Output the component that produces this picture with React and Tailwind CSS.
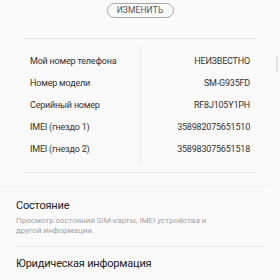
import React from 'react';

const rows = [
  ['Мой номер телефона', 'НЕИЗВЕСТНО'],
  ['Номер модели', 'SM-G935FD'],
  ['Серийный номер', 'RF8J105Y1PH'],
  ['IMEI (гнездо 1)', '358982075651510'],
  ['IMEI (гнездо 2)', '358983075651518'],
];

const App = () => {
  return (
    <div className="relative w-[280px] h-[280px] overflow-hidden bg-[#fafafa] font-['Roboto','Liberation_Sans',sans-serif]">
      {/* scroll edge */}
      <div className="absolute right-[2px] top-[57px] w-[2px] h-[15px] rounded-b-full bg-[#e4e4e4]" />

      <div className="flex justify-center pt-[3px]">
        <div className="w-[67px] h-[15px] rounded-full border border-[#a8a8a8] flex items-center justify-center text-[8.5px] text-[#555] tracking-[0.1px]">
          ИЗМЕНИТЬ
        </div>
      </div>

      <div className="mt-[20px] mx-[24px] h-px bg-[#e2e2e2]" />

      <div className="mx-[24px] pt-[6px] pb-[7px]">
        <div className="flex">
          <div className="w-[116px] pt-[6px] pb-[4px] pl-[6px]">
            {rows.map(([label]) => (
              <div key={label} className="h-[22px] flex items-center text-[9px] tracking-[-0.2px] text-[#333] whitespace-nowrap">
                {label}
              </div>
            ))}
          </div>
          <div className="flex-1 border-l border-[#ebebeb] pt-[6px] pb-[4px] pr-[6px]">
            {rows.map(([label, value]) => (
              <div key={label} className="h-[22px] flex items-center justify-end text-[9px] tracking-[-0.2px] text-[#333] whitespace-nowrap">
                {value}
              </div>
            ))}
          </div>
        </div>
      </div>

      <div className="mx-[24px] h-px bg-[#e2e2e2]" />

      <div className="mt-[13px] w-[270px] h-px bg-[#f2f2f2]" />

      <div className="px-[16px]">
        <div className="mt-[12px] text-[11px] leading-[14px] tracking-[-0.2px] text-[#222]">Состояние</div>
        <div className="mt-[3px] text-[8px] leading-[10px] text-[#a3a3a3]">
          Просмотр состояния SIM-карты, IMEI устройства и
          <br />
          другой информации.
        </div>
      </div>

      <div className="mt-[10px] mx-[16px] h-px bg-[#ececec]" />

      <div className="px-[16px] mt-[10px] text-[11px] leading-[14px] tracking-[-0.2px] text-[#222]">
        Юридическая информация
      </div>

      <div className="mt-[10px] mx-[12px] h-px bg-[#ececec]" />
    </div>
  );
};

export default App;
